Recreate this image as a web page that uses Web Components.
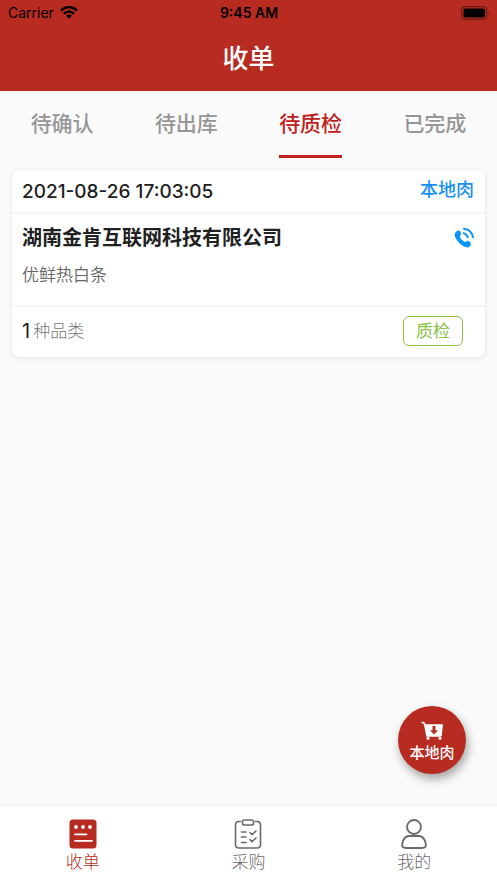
<!DOCTYPE html>
<html lang="zh-CN">
<head>
<meta charset="utf-8">
<meta name="viewport" content="width=device-width, initial-scale=1">
<title>收单</title>
<style>
  :root { --red: #b72b21; --blue: #1690f5; --green: #8bc34a; --grey: #969696; }
  body { margin: 0; background: #fafafa; color: #212121; font-family: Inter, "Noto Sans CJK SC", sans-serif; }
</style>
</head>
<body>
<receipt-app></receipt-app>
<script>
const define = (name, html) => {
  const template = document.createElement('template');
  template.innerHTML = '<style>*{box-sizing:border-box}button,a{font:inherit;color:inherit}</style>' + html;
  customElements.define(name, class extends HTMLElement {
    constructor() {
      super();
      this.attachShadow({ mode: 'open' }).append(template.content.cloneNode(true));
    }
  });
};

define('status-bar', `
<style>
  :host { display: grid; grid-template-columns: 1fr auto 1fr; align-items: center; height: 26px; padding: 0 7px 0 8px; color: #000; font-size: 14px; line-height: 20px; }
  .carrier { display: flex; align-items: center; gap: 6px; }
  .time { font-weight: 600; }
  .battery { justify-self: end; }
  svg { display: block; }
</style>
<span class="carrier"><span>Carrier</span>
  <svg width="18" height="14" viewBox="0 0 18 14" fill="none" stroke="#000" stroke-width="2.5"><path d="M1 4.500Q9-2.500 17 4.500M4 7.700Q9 3.300 14 7.700"/><path d="M6.100 9.700Q9 7.300 11.900 9.700L9 12.700Z" fill="#000" stroke="none"/></svg>
</span>
<span class="time">9:45 AM</span>
<svg class="battery" width="29" height="14" viewBox="0 0 29 14"><rect x=".7" y=".7" width="25" height="12.6" rx="3.5" fill="none" stroke="#000" stroke-opacity=".4" stroke-width="1.2"/><rect x="2.5" y="2.5" width="21.5" height="9" rx="2"/><path d="M27.2 5q1.6 2 0 4z" opacity=".5"/></svg>`);

define('app-header', `
<style>
  :host { display: block; background: var(--red); }
  h1 { margin: 0; height: 65px; line-height: 66px; font-size: 26px; font-weight: 500; text-align: center; color: #fff; }
</style>
<status-bar></status-bar>
<h1><slot></slot></h1>`);

define('tab-item', `
<style>
  :host { display: flex; justify-content: center; color: var(--grey); }
  button { height: 67px; padding: 2px 0 0; border: 0; border-bottom: 3px solid transparent; background: none; font-size: 21px; font-weight: 500; line-height: 62px; }
  :host([active]) { color: #c1201c; }
  :host([active]) button { border-color: #c1201c; }
</style>
<button type="button" role="tab"><slot></slot></button>`);

define('tab-strip', `
<style>
  :host { display: grid; grid-template-columns: repeat(4, 1fr); }
</style><slot></slot>`);

define('order-card', `
<style>
  :host { display: block; margin: 12px; background: #fff; border-radius: 7px; box-shadow: 0 1px 4px #0000001a; }
  header, footer, .company { display: flex; align-items: center; justify-content: space-between; }
  header { height: 44px; padding: 0 11px 2px 10px; border-bottom: 2px solid #f5f5f5; }
  time { padding-top: 2px; font-size: 19px; font-weight: 500; }
  .type { font-size: 18px; line-height: 28px; font-weight: 500; color: var(--blue); }
  .body { height: 91px; padding: 9px 10px 0; }
  h2 { margin: 0; font-size: 20px; line-height: 30px; font-weight: 700; }
  .call { display: flex; padding: 0; border: 0; background: none; }
  p { margin: 8px 0 0; font-size: 17px; line-height: 28px; font-weight: 350; color: #666; }
  footer { height: 52px; padding: 0 22px 2px 10px; border-top: 2px solid #f5f5f5; }
  .count { display: flex; align-items: center; gap: 3px; font-size: 20px; line-height: 28px; }
  .unit { font-size: 17px; font-weight: 300; color: #777; }
  .check { width: 60px; height: 30px; padding: 0; border: 1px solid var(--green); border-radius: 6px; background: none; color: var(--green); font-size: 17px; line-height: 28px; }
</style>
<header><time datetime="2021-08-26T17:03:05"><slot name="time"></slot></time><span class="type"><slot name="type"></slot></span></header>
<div class="body">
  <div class="company"><h2><slot name="company"></slot></h2>
    <button class="call" type="button" aria-label="拨打电话"><svg width="21" height="22" viewBox="0 0 20 22"><path d="M1.500 4.700Q3.800 2.700 5.400 4.100Q7.200 6.600 6.100 8.500L5.200 10Q7 13.300 10.400 15.100L12 14.200Q13.200 13.400 14.500 14.300L16 15.700Q17.300 17.400 15.100 19.600Q13.200 21.400 9.600 19.500Q3.700 16.500 1 10.800Q-.8 7.100 1.500 4.700Z" fill="#0b95f6"/><g fill="none" stroke="#0b95f6" stroke-width="2"><path d="M8.500 6Q12.500 6.800 13.400 11"/><path d="M8.800 1.700Q17.200 2.200 18.700 11"/></g></svg></button>
  </div>
  <p><slot name="product"></slot></p>
</div>
<footer><span class="count"><slot name="count"></slot><span class="unit">种品类</span></span><button class="check" type="button">质检</button></footer>`);

define('cart-button', `
<style>
  :host { display: block; align-self: flex-end; margin: auto 31px 30px auto; }
  button { display: flex; flex-direction: column; align-items: center; width: 68px; height: 68px; padding: 15px 0 0; border: 0; border-radius: 50%; background: var(--red); color: #fff; font-size: 15px; line-height: 24px; font-weight: 500; box-shadow: 2px 5px 10px #00000059; }
  svg { flex: none; }
</style>
<button type="button"><svg width="22" height="20" viewBox="0 0 22 20"><path d="M1.200 1.500Q3 1 3.800 3.500L6 15H19.500" fill="none" stroke="#fff" stroke-width="1.600" stroke-linecap="round"/><path d="M4 3.300H22L20.700 15H6Z" fill="#fff"/><path d="M11.500 5h3v4.200h2.500l-4 4.200-4-4.200h2.500z" fill="#b72b21"/><circle cx="7" cy="17.300" r="1.500" fill="#fff"/><circle cx="19" cy="17.300" r="1.500" fill="#fff"/></svg><span><slot></slot></span></button>`);

define('nav-item', `
<style>
  :host { display: block; color: #6a6a6a; }
  :host([active]) { color: var(--red); }
  a { display: flex; flex-direction: column; align-items: center; padding-top: 13px; text-decoration: none; font-size: 17px; line-height: 24px; font-weight: 300; }
  ::slotted(svg) { display: block; width: 28px; height: 31px; }
</style>
<a href="#"><slot name="icon"></slot><slot></slot></a>`);

define('bottom-nav', `
<style>
  :host { display: grid; grid-template-columns: repeat(3, 1fr); height: 79px; border-top: 2px solid #f3f3f3; background: #fff; }
</style><slot></slot>`);

define('receipt-app', `
<style>
  :host { display: flex; flex-direction: column; min-height: 100vh; }
</style>
<app-header>收单</app-header>
<tab-strip role="tablist"><tab-item>待确认</tab-item><tab-item>待出库</tab-item><tab-item active>待质检</tab-item><tab-item>已完成</tab-item></tab-strip>
<order-card><span slot="time">2021-08-26 17:03:05</span><span slot="type">本地肉</span><span slot="company">湖南金肯互联网科技有限公司</span><span slot="product">优鲜热白条</span><span slot="count">1</span></order-card>
<cart-button>本地肉</cart-button>
<bottom-nav>
  <nav-item active><svg slot="icon" viewBox="0 0 28 31"><rect x=".5" y=".5" width="27" height="29" rx="3.500" fill="#b72b21"/><g fill="#fff"><circle cx="7" cy="8" r="1.900"/><circle cx="14" cy="8" r="1.900"/><circle cx="21" cy="8" r="1.900"/></g><path d="M6 15.300h11.500M6 21.800h17" stroke="#fff" stroke-width="1.800" stroke-linecap="round"/></svg>收单</nav-item>
  <nav-item><svg slot="icon" viewBox="0 0 28 31" fill="none" stroke="#6a6a6a" stroke-width="1.600" stroke-linecap="round" stroke-linejoin="round"><path d="M6.500 2.500H5Q1.500 2.500 1.500 6V25.500Q1.500 29 5 29H23Q26.500 29 26.500 25.500V6Q26.500 2.500 23 2.500H21.500"/><rect x="8.500" y="1" width="11" height="5" rx="1.800"/><path d="M7.500 13H12M7.500 18H12M7.500 23.500H12M16 13.500l2 2.200 4-3.700M16 20.500l2 2.200 4-3.700"/></svg>采购</nav-item>
  <nav-item><svg slot="icon" viewBox="0 0 28 31" fill="none" stroke="#6a6a6a" stroke-width="1.800"><circle cx="14" cy="8" r="7"/><path d="M9 17H19Q24 17 25.700 24.500Q26.700 29 22 29H6Q1.300 29 2.300 24.500Q4 17 9 17Z"/></svg>我的</nav-item>
</bottom-nav>`);
</script>
</body>
</html>
